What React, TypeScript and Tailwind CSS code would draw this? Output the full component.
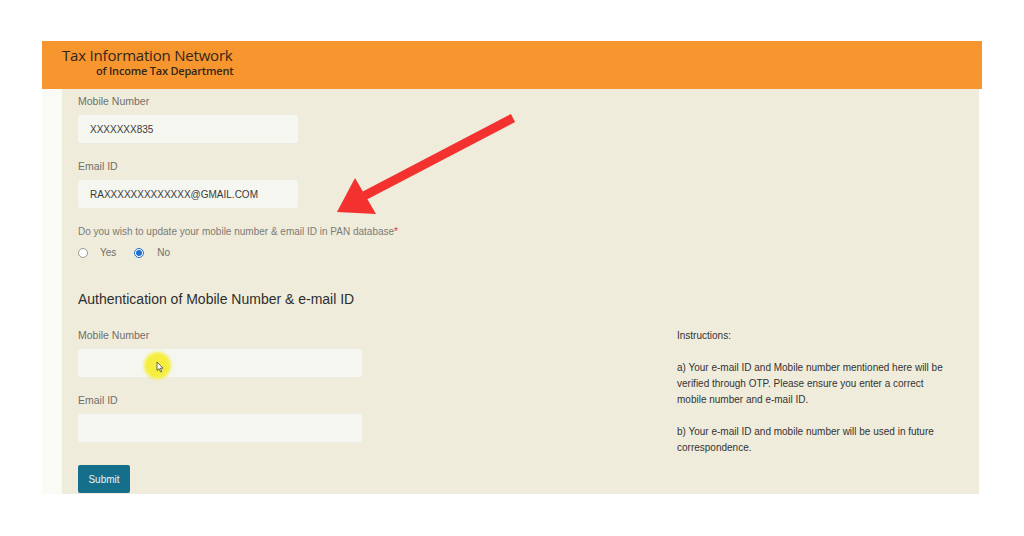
import React from 'react';

const sans = { fontFamily: '"Liberation Sans", Arial, sans-serif' };

function Field({ label, value, width }: { label: string; value?: string; width: string }) {
  return (
    <div className="flex flex-col">
      <div className="text-[10.5px] leading-[14px] text-[#6f6f6a]">{label}</div>
      <div
        className={`mt-[7px] flex h-[28px] items-center rounded-[2px] bg-[#f5f6f0] pl-[12px] text-[10px] text-[#3a3a3a] shadow-[0_0_0_1px_#ebebe0] ${width}`}
      >
        {value}
      </div>
    </div>
  );
}

function Radio({ checked }: { checked?: boolean }) {
  return checked ? (
    <span className="flex h-[10px] w-[10px] items-center justify-center rounded-full border border-[#1f6fd0] bg-white">
      <span className="h-[6px] w-[6px] rounded-full bg-[#1f6fd0]" />
    </span>
  ) : (
    <span className="h-[10px] w-[10px] rounded-full border border-[#9a9a94] bg-white" />
  );
}

function Arrow() {
  return (
    <svg className="pointer-events-none absolute left-0 top-0" width="1024" height="536" viewBox="0 0 1024 536">
      <line x1="513" y1="118" x2="362" y2="197" stroke="#f3312f" strokeWidth="9" strokeLinecap="butt" />
      <polygon points="337,212 355,178 376,214" fill="#f3312f" />
    </svg>
  );
}

function CursorMark() {
  return (
    <div className="pointer-events-none absolute left-[144px] top-[352px]">
      <div className="h-[27px] w-[27px] rounded-full bg-[#f6ee2c] opacity-90 blur-[1.5px]" />
      <svg className="absolute left-[12px] top-[9px]" width="8" height="12" viewBox="0 0 8 12">
        <path d="M1 1 L1 9.5 L3 7.6 L4.6 11 L5.8 10.4 L4.3 7.2 L7 7.2 Z" fill="#fff" stroke="#444" strokeWidth="0.8" />
      </svg>
    </div>
  );
}

export default function App() {
  return (
    <div className="relative h-[536px] w-[1024px] overflow-hidden bg-white pl-[42px] pt-[41px]" style={sans}>
      <div className="w-[940px]">
        <header className="flex h-[48px] flex-col bg-[#f7962f] pl-[20px] pt-[4px] text-[#33261a]" style={{ fontFamily: '"Open Sans", sans-serif' }}>
          <div className="text-[15px] leading-[20px] tracking-[-0.2px]">Tax Information Network</div>
          <div className="-mt-[2px] pl-[34px] text-[11px] font-semibold leading-[15px] tracking-[-0.2px]">
            of Income Tax Department
          </div>
        </header>
        <div className="flex h-[405px]">
          <div className="w-[20px] bg-[#fbfbf6]" />
          <main className="w-[917px] bg-[#efecdb] pl-[16px] pt-[5px]">
            <Field label="Mobile Number" value="XXXXXXX835" width="w-[220px]" />
            <div className="mt-[16px]">
              <Field label="Email ID" value="RAXXXXXXXXXXXXX@GMAIL.COM" width="w-[220px]" />
            </div>
            <div className="mt-[17px] text-[10px] leading-[14px] text-[#7b7b76]">
              Do you wish to update your mobile number &amp; email ID in PAN database<span className="text-[#d33]">*</span>
            </div>
            <div className="mt-[7px] flex items-center text-[10px] leading-[14px] text-[#6f6f6a]">
              <Radio />
              <span className="ml-[12px]">Yes</span>
              <span className="ml-[18px]" />
              <Radio checked />
              <span className="ml-[13px]">No</span>
            </div>
            <div className="flex">
              <div className="w-[284px]">
                <h2 className="mt-[29px] text-[14px] leading-[20px] text-[#2e2e2e]">
                  Authentication of Mobile Number &amp; e-mail ID
                </h2>
                <div className="mt-[19px]">
                  <Field label="Mobile Number" width="w-[284px]" />
                </div>
                <div className="mt-[16px]">
                  <Field label="Email ID" width="w-[284px]" />
                </div>
                <button className="mt-[23px] h-[28px] w-[52px] rounded-[2px] bg-[#166f8a] text-[10px] text-[#e8f4f6]">
                  Submit
                </button>
              </div>
              <div className="ml-[315px] mt-[68px] w-[276px] text-[10px] leading-[16px] text-[#333]">
                <p>Instructions:</p>
                <p className="mt-[16px]">
                  a) Your e-mail ID and Mobile number mentioned here will be verified through OTP. Please ensure you enter a correct
                  mobile number and e-mail ID.
                </p>
                <p className="mt-[16px]">b) Your e-mail ID and mobile number will be used in future correspondence.</p>
              </div>
            </div>
          </main>
        </div>
      </div>
      <Arrow />
      <CursorMark />
    </div>
  );
}
